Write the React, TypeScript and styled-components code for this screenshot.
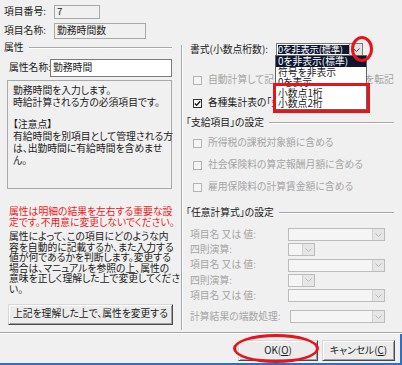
import React from "react";
import styled, { createGlobalStyle } from "styled-components";

const FONT = `"Noto Sans CJK JP", "Noto Sans", sans-serif`;

const GlobalStyle = createGlobalStyle`
  html, body { margin: 0; padding: 0; background: #f0f0f0; }
  body { font-family: ${FONT}; }
  * { box-sizing: border-box; }
`;

const Page = styled.div`
  position: relative;
  width: 402px;
  height: 365px;
  overflow: hidden;
  background: #f0f0f0;
  font-family: ${FONT};
  font-size: 9.8px;
  font-feature-settings: "palt";
  color: #1a1a1a;
  display: flex;
  flex-direction: column;
`;

const TopFields = styled.div`
  height: 41px;
  padding: 5px 0 0 4px;
  display: flex;
  flex-direction: column;
  gap: 4px;
`;

const FieldRow = styled.div<{ $h: number; $mt?: number; $pl?: number }>`
  display: flex;
  align-items: center;
  height: ${(p) => p.$h}px;
  margin-top: ${(p) => p.$mt ?? 0}px;
  padding-left: ${(p) => p.$pl ?? 0}px;
  flex: none;
`;

const Label = styled.span<{ $w?: number; $disabled?: boolean }>`
  width: ${(p) => (p.$w ? `${p.$w}px` : "auto")};
  flex: none;
  white-space: nowrap;
  line-height: 1;
  color: ${(p) => (p.$disabled ? "#a4a4a4" : "#1a1a1a")};
`;

const TextBox = styled.div<{ $w: number; $readonly?: boolean }>`
  width: ${(p) => p.$w}px;
  height: 100%;
  border: 1px solid ${(p) => (p.$readonly ? "#a9a9a9" : "#7a7a7a")};
  background: ${(p) => (p.$readonly ? "#f0f0f0" : "#ffffff")};
  padding: 0 2px;
  display: flex;
  align-items: center;
  white-space: nowrap;
  line-height: 1;
`;

const Main = styled.div`
  height: 291px;
  display: flex;
  flex: none;
`;

const LeftCol = styled.div`
  width: 181px;
  flex: none;
  display: flex;
  flex-direction: column;
`;

const GroupHeader = styled.div<{ $mt?: number; $ml?: number; $pr?: number }>`
  display: flex;
  align-items: center;
  height: 14px;
  flex: none;
  margin-top: ${(p) => p.$mt ?? 0}px;
  margin-left: ${(p) => p.$ml ?? 0}px;
  padding-right: ${(p) => p.$pr ?? 0}px;
  white-space: nowrap;
  line-height: 1;
`;

const EtchedLine = styled.div`
  flex: 1;
  height: 2px;
  margin-left: 5px;
  border-top: 1px solid #a8a8a8;
  border-bottom: 1px solid #ffffff;
`;

const DescBox = styled.div`
  margin: 3px 0 0 7px;
  width: 165px;
  height: 109px;
  flex: none;
  border: 1px solid #a8a8a8;
  padding: 3px 0 0 5px;
  line-height: 12px;
  white-space: nowrap;
`;

const TextBlock = styled.div<{ $lh: number; $mt: number; $color?: string }>`
  margin: ${(p) => p.$mt}px 0 0 9px;
  line-height: ${(p) => p.$lh}px;
  color: ${(p) => p.$color ?? "#1a1a1a"};
  white-space: nowrap;
  flex: none;
`;

const Line = styled.div`
  min-height: 1em;
`;

const PushButton = styled.div<{ $w: number; $h: number }>`
  width: ${(p) => p.$w}px;
  height: ${(p) => p.$h}px;
  flex: none;
  display: flex;
  align-items: center;
  justify-content: center;
  background: #ececec;
  border: 1px solid;
  border-color: #d8d8d8 #4a4a4a #4a4a4a #d8d8d8;
  box-shadow: inset 1px 1px 0 #ffffff, inset -1px -1px 0 #a0a0a0;
  white-space: nowrap;
  line-height: 1;
  color: #1a1a1a;
  u {
    text-decoration: underline;
    text-underline-offset: 1px;
  }
`;

const WideButton = styled(PushButton)`
  margin: 9px 0 0 8px;
`;

const VSep = styled.div`
  width: 2px;
  flex: none;
  margin: 4px 0 2px;
  border-left: 1px solid #a8a8a8;
  border-right: 1px solid #ffffff;
`;

const RightCol = styled.div`
  flex: 1;
  padding: 0 14px 0 7px;
  display: flex;
  flex-direction: column;
`;

const SelectWrap = styled.div`
  position: relative;
  width: 87px;
  height: 13px;
  display: flex;
  border: 1px solid #7a7a7a;
  background: #ffffff;
`;

const SelectValue = styled.div`
  flex: 1;
  min-width: 0;
  margin: 1px 0 1px 1px;
  background: #0d1630;
  color: #ffffff;
  display: flex;
  align-items: center;
  white-space: nowrap;
  line-height: 1;
  font-size: 9.3px;
  letter-spacing: -0.2px;
`;

const DropBtn = styled.div<{ $disabled?: boolean }>`
  width: ${(p) => (p.$disabled ? 12 : 13)}px;
  flex: none;
  display: flex;
  align-items: center;
  justify-content: center;
  background: ${(p) => (p.$disabled ? "#e6e6e6" : "#e3e3e3")};
  border-left: 1px solid ${(p) => (p.$disabled ? "#cfcfcf" : "#acacac")};
`;

const DropList = styled.div`
  position: absolute;
  top: 100%;
  left: -2px;
  width: 92px;
  background: #ffffff;
  border: 1px solid #646464;
  z-index: 2;
`;

const DropItem = styled.div<{ $selected?: boolean }>`
  height: 10.6px;
  line-height: 10.6px;
  padding-left: 2px;
  white-space: nowrap;
  background: ${(p) => (p.$selected ? "#0d1630" : "transparent")};
  color: ${(p) => (p.$selected ? "#ffffff" : "#1a1a1a")};
`;

const CheckRow = styled.div<{ $mt: number; $disabled?: boolean }>`
  display: flex;
  align-items: center;
  height: 14px;
  flex: none;
  margin-top: ${(p) => p.$mt}px;
  padding-left: 3px;
  white-space: nowrap;
  line-height: 1;
  color: ${(p) => (p.$disabled ? "#a4a4a4" : "#1a1a1a")};
`;

const CheckBox = styled.div<{ $disabled?: boolean }>`
  width: 9px;
  height: 9px;
  flex: none;
  margin-right: 6px;
  border: 1px solid ${(p) => (p.$disabled ? "#b4b4b4" : "#333333")};
  background: ${(p) => (p.$disabled ? "#f4f4f4" : "#ffffff")};
  display: flex;
  align-items: center;
  justify-content: center;
`;

const FormulaRow = styled.div<{ $mt: number }>`
  display: flex;
  align-items: center;
  height: 13px;
  flex: none;
  margin-top: ${(p) => p.$mt}px;
`;

const Combo = styled.div<{ $w: number }>`
  width: ${(p) => p.$w}px;
  height: 100%;
  display: flex;
  justify-content: flex-end;
  border: 1px solid #bcbcbc;
  background: #f5f5f5;
`;

const HSep = styled.div`
  height: 2px;
  flex: none;
  border-top: 1px solid #a8a8a8;
  border-bottom: 1px solid #ffffff;
`;

const Footer = styled.div`
  flex: 1;
  display: flex;
  justify-content: flex-end;
  align-items: flex-start;
  gap: 4px;
  padding: 6px 5px 0 0;
  border-right: 2px solid #2f6fc4;
  border-bottom: 2px solid #2f6fc4;
`;

const Annotation = styled.div<{
  $l: number;
  $t: number;
  $w: number;
  $h: number;
  $round?: boolean;
}>`
  position: absolute;
  left: ${(p) => p.$l}px;
  top: ${(p) => p.$t}px;
  width: ${(p) => p.$w}px;
  height: ${(p) => p.$h}px;
  border: 3px solid #e8141c;
  border-radius: ${(p) => (p.$round ? "50%" : "0")};
  pointer-events: none;
  z-index: 5;
`;

const Chevron = ({ color }: { color: string }) => (
  <svg width="7" height="4" viewBox="0 0 7 4">
    <polyline points="0.5,0.5 3.5,3.5 6.5,0.5" fill="none" stroke={color} strokeWidth="1" />
  </svg>
);

const Check = () => (
  <svg width="7" height="7" viewBox="0 0 7 7">
    <polyline points="0.8,3.4 2.7,5.3 6.2,1.2" fill="none" stroke="#1a1a1a" strokeWidth="1.4" />
  </svg>
);

const descLines = [
  "勤務時間を入力します。",
  "時給計算される方の必須項目です。",
  "",
  "【注意点】",
  "有給時間を別項目として管理される方",
  "は、出勤時間に有給時間を含めませ",
  "ん。",
];

const warnLines = [
  "属性は明細の結果を左右する重要な設",
  "定です。不用意に変更しないでください。",
];

const infoLines = [
  "属性によって、この項目にどのような内",
  "容を自動的に記載するか、また入力する",
  "値が何であるかを判断します。変更する",
  "場合は、マニュアルを参照の上、属性の",
  "意味を正しく理解した上で変更してくださ",
  "い。",
];

const options = ["0を非表示(標準)", "符号を非表示", "0を表示", "小数点1桁", "小数点2桁"];

const paySettings = [
  "所得税の課税対象額に含める",
  "社会保険料の算定報酬月額に含める",
  "雇用保険料の計算賃金額に含める",
];

const formulaRows: { label: string; w: number; mt: number; lw: number }[] = [
  { label: "項目名 又は 値:", w: 97, mt: 8, lw: 98 },
  { label: "四則演算:", w: 27, mt: 2.33, lw: 98 },
  { label: "項目名 又は 値:", w: 97, mt: 2.33, lw: 98 },
  { label: "四則演算:", w: 27, mt: 2.33, lw: 98 },
  { label: "項目名 又は 値:", w: 97, mt: 2.33, lw: 98 },
  { label: "計算結果の端数処理:", w: 95, mt: 7.7, lw: 100 },
];

export default function App() {
  return (
    <>
      <GlobalStyle />
      <Page>
        <TopFields>
          <FieldRow $h={14}>
            <Label $w={50}>項目番号:</Label>
            <TextBox $w={46} $readonly>7</TextBox>
          </FieldRow>
          <FieldRow $h={16}>
            <Label $w={50}>項目名称:</Label>
            <TextBox $w={92} $readonly>勤務時間数</TextBox>
          </FieldRow>
        </TopFields>

        <Main>
          <LeftCol>
            <GroupHeader $ml={4} $pr={9}>
              属性
              <EtchedLine />
            </GroupHeader>
            <FieldRow $h={18} $mt={4} $pl={9}>
              <Label $w={41}>属性名称:</Label>
              <TextBox $w={122}>勤務時間</TextBox>
            </FieldRow>
            <DescBox>
              {descLines.map((l, i) => (
                <Line key={i}>{l}</Line>
              ))}
            </DescBox>
            <TextBlock $lh={11} $mt={17} $color="#ec1c24">
              {warnLines.map((l, i) => (
                <Line key={i}>{l}</Line>
              ))}
            </TextBlock>
            <TextBlock $lh={10.6} $mt={3}>
              {infoLines.map((l, i) => (
                <Line key={i}>{l}</Line>
              ))}
            </TextBlock>
            <WideButton $w={165} $h={21}>上記を理解した上で、属性を変更する</WideButton>
          </LeftCol>

          <VSep />

          <RightCol>
            <FieldRow $h={13} $mt={2}>
              <Label $w={86}>書式(小数点桁数):</Label>
              <SelectWrap>
                <SelectValue>0を非表示(標準)</SelectValue>
                <DropBtn>
                  <Chevron color="#404040" />
                </DropBtn>
                <DropList>
                  {options.map((o, i) => (
                    <DropItem key={o} $selected={i === 0}>
                      {o}
                    </DropItem>
                  ))}
                </DropList>
              </SelectWrap>
            </FieldRow>

            <CheckRow $mt={17} $disabled>
              <CheckBox $disabled />
              自動計算して記入し、翌月は前月の値を転記
            </CheckRow>
            <CheckRow $mt={9}>
              <CheckBox>
                <Check />
              </CheckBox>
              各種集計表の「金額」欄に表示する
            </CheckRow>

            <GroupHeader $mt={6} $ml={-4}>
              「支給項目」の設定
              <EtchedLine />
            </GroupHeader>
            {paySettings.map((s, i) => (
              <CheckRow key={s} $mt={i === 0 ? 6 : 8} $disabled>
                <CheckBox $disabled />
                {s}
              </CheckRow>
            ))}

            <GroupHeader $mt={12} $ml={-4}>
              「任意計算式」の設定
              <EtchedLine />
            </GroupHeader>
            {formulaRows.map((r, i) => (
              <FormulaRow key={i} $mt={r.mt}>
                <Label $w={r.lw} $disabled>
                  {r.label}
                </Label>
                <Combo $w={r.w}>
                  <DropBtn $disabled>
                    <Chevron color="#b8b8b8" />
                  </DropBtn>
                </Combo>
              </FormulaRow>
            ))}
          </RightCol>
        </Main>

        <HSep />
        <Footer>
          <PushButton $w={80} $h={21}>
            OK(<u>O</u>)
          </PushButton>
          <PushButton $w={73} $h={21}>
            キャンセル(<u>C</u>)
          </PushButton>
        </Footer>

        <Annotation $l={351} $t={36} $w={22} $h={26} $round />
        <Annotation $l={273} $t={83} $w={97} $h={30} />
        <Annotation $l={233} $t={334} $w={86} $h={29} $round />
      </Page>
    </>
  );
}
